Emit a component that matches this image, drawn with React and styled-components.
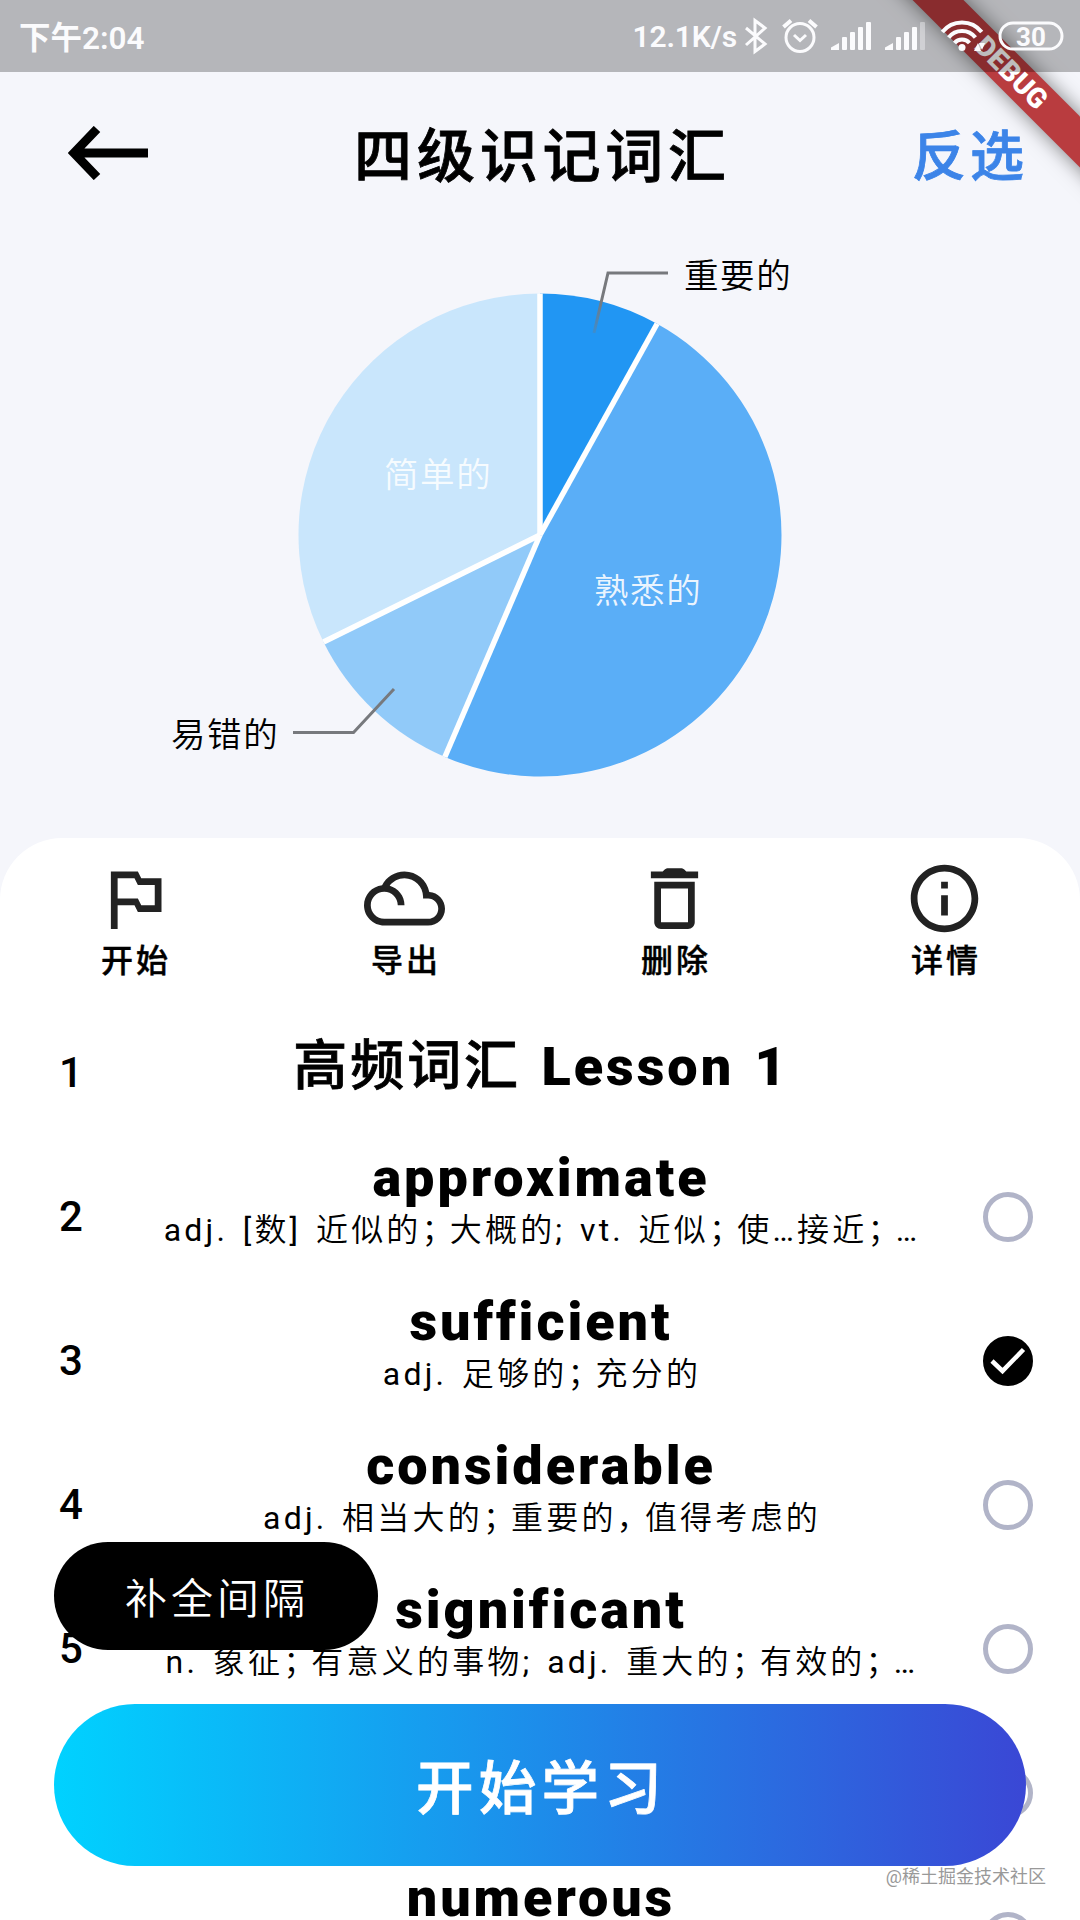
import React from "react";
import styled, { createGlobalStyle } from "styled-components";

const GlobalStyle = createGlobalStyle`
  * {
    box-sizing: border-box;
  }

  body {
    margin: 0;
    background: #f5f6fb;
    font-family: Roboto, "Noto Sans CJK SC", sans-serif;
  }
`;

const words = [
  { id: 1, hanzi: "高频词汇", title: " Lesson 1", heading: true },
  {
    id: 2,
    title: "approximate",
    meaning: "adj. [数] 近似的；大概的; vt. 近似；使…接近；…",
  },
  { id: 3, title: "sufficient", meaning: "adj. 足够的；充分的", checked: true },
  { id: 4, title: "considerable", meaning: "adj. 相当大的；重要的，值得考虑的" },
  {
    id: 5,
    title: "significant",
    meaning: "n. 象征；有意义的事物; adj. 重大的；有效的；…",
  },
  { id: 6 },
  { id: 7, title: "numerous" },
];

const actions = [
  {
    label: "开始",
    path: "M14 6l-1-2H5v17h2v-7h5l1 2h7V6h-6zm4 8h-4l-1-2H7V6h5l1 2h5v6z",
  },
  {
    label: "导出",
    path: "M19.35 10.04C18.67 6.59 15.64 4 12 4 9.11 4 6.61 5.64 5.36 8.04 2.35 8.36 0 10.9 0 14c0 3.31 2.69 6 6 6h13c2.76 0 5-2.24 5-5 0-2.64-2.05-4.78-4.65-4.96zM19 18H6c-2.21 0-4-1.79-4-4s1.79-4 4-4 4 1.79 4 4h2c0-2.76-1.86-5.08-4.4-5.78C8.61 6.88 10.2 6 12 6c3.03 0 5.5 2.47 5.5 5.5v.5H19c1.65 0 3 1.35 3 3s-1.35 3-3 3z",
  },
  {
    label: "删除",
    path: "M6 19c0 1.1.9 2 2 2h8c1.1 0 2-.9 2-2V7H6v12zM8 9h8v10H8V9zm7.5-5l-.6-.6c-.3-.3-.7-.4-1.1-.4h-3.6c-.4 0-.8.1-1.1.4L8.5 4H5v2h14V4h-3.5z",
  },
  {
    label: "详情",
    path: "M11 7h2v2h-2V7zm0 4h2v6h-2v-6zm1-9C6.48 2 2 6.48 2 12s4.48 10 10 10 10-4.48 10-10S17.52 2 12 2zm0 18c-4.41 0-8-3.59-8-8s3.59-8 8-8 8 3.59 8 8-3.59 8-8 8z",
  },
];

const Screen = styled.div`
  position: relative;
  width: 1080px;
  height: 1920px;
  overflow: hidden;
  display: flex;
  flex-direction: column;
  background: #f5f6fb;
  color: #000;
`;

const StatusBar = styled.div`
  position: relative;
  z-index: 3;
  flex: none;
  height: 72px;
  padding: 0 16px 0 19px;
  display: flex;
  align-items: center;
  justify-content: space-between;
  background: rgba(0, 0, 0, 0.26);
  color: #fbfbfd;
`;

const Clock = styled.span`
  padding-bottom: 3px;
  font-size: 31.5px;
  font-weight: 600;
`;

const StatusIcons = styled.div`
  display: flex;
  align-items: center;
  height: 72px;

  svg {
    display: block;
  }
`;

const Speed = styled.span`
  padding-right: 1px;
  font-size: 30px;
  font-weight: 600;
  letter-spacing: -0.2px;
`;

const Banner = styled.div`
  position: absolute;
  z-index: 2;
  top: 54px;
  left: 810px;
  width: 400px;
  height: 36px;
  padding-left: 3px;
  transform: rotate(45deg);
  background: #b93c3f;
  box-shadow: 0 0 20px rgba(0, 0, 0, 0.5);
  color: #fff;
  font-size: 28px;
  font-weight: 900;
  line-height: 36px;
  text-align: center;
`;

const Header = styled.header`
  flex: none;
  height: 168px;
  padding: 0 52px 6px 68px;
  display: grid;
  grid-template-columns: 189px 1fr 200px;
  align-items: center;

  svg {
    display: block;
  }
`;

const Title = styled.h1`
  margin: 0;
  padding-bottom: 2px;
  font-size: 58px;
  font-weight: 500;
  letter-spacing: 4.8px;
  text-align: center;
  -webkit-text-stroke: 0.8px currentColor;
`;

const Invert = styled.span`
  padding-bottom: 2px;
  color: #3c84e8;
  font-size: 54px;
  font-weight: 500;
  letter-spacing: 4px;
  text-align: right;
  -webkit-text-stroke: 0.8px currentColor;
`;

const Chart = styled.svg`
  flex: none;
  display: block;

  text {
    font-size: 34.5px;
    font-weight: 350;
    letter-spacing: 1.6px;
  }
`;

const Sheet = styled.main`
  flex: none;
  height: 1082px;
  overflow: hidden;
  border-radius: 62px 62px 0 0;
  background: #fff;
`;

const Actions = styled.div`
  height: 163px;
  padding-top: 20px;
  display: grid;
  grid-template-columns: repeat(4, 1fr);
`;

const Action = styled.div`
  display: flex;
  flex-direction: column;
  align-items: center;
  font-size: 32px;
  font-weight: 500;
  line-height: 44px;
  letter-spacing: 3px;
  text-indent: 2px;
  -webkit-text-stroke: 0.4px currentColor;

  svg {
    display: block;
    width: 81px;
    height: 81px;
    margin-left: -1px;
    fill: #222;
  }
`;

const Row = styled.div`
  height: 144px;
  padding: 0 47px 0 59px;
  display: grid;
  grid-template-columns: 95px 1fr 103px;
  align-items: center;
`;

const Index = styled.span`
  padding-bottom: 2px;
  font-size: 42px;
  font-weight: 500;
`;

const Entry = styled.div`
  padding-bottom: ${({ $heading }) => ($heading ? 12 : 34)}px;
  display: flex;
  flex-direction: column;
  align-items: center;
  white-space: nowrap;
`;

const Word = styled.div`
  padding-right: 2px;
  font-size: 54px;
  font-weight: 900;
  line-height: 60px;
  letter-spacing: 2.95px;
  white-space: pre;
  word-spacing: 4px;
`;

const Hanzi = styled.span`
  font-weight: 500;
  -webkit-text-stroke: 0.8px currentColor;
`;

const Meaning = styled.div`
  height: 44px;
  font-size: 32px;
  font-weight: 350;
  line-height: 44px;
  letter-spacing: 3.2px;
  word-spacing: 3.5px;
`;

const Latin = styled.span`
  font-weight: 400;
`;

// full-width marks sit a little tighter than the characters around them
const Mark = styled.span`
  margin-right: -7px;
`;

const Check = styled.span`
  justify-self: end;
  width: 50px;
  height: 50px;
  border: 5px solid ${({ $on }) => ($on ? "#000" : "#b1b4c8")};
  border-radius: 50%;
  background: ${({ $on }) => ($on ? "#000" : "#fff")};

  svg {
    display: block;
    margin: -5px;
  }
`;

const FillGap = styled.div`
  position: absolute;
  left: 54px;
  top: 1542px;
  width: 324px;
  height: 108px;
  padding: 0 0 2px 2px;
  border-radius: 54px;
  display: flex;
  align-items: center;
  justify-content: center;
  background: #000;
  color: #fff;
  font-size: 42px;
  font-weight: 350;
  letter-spacing: 4px;
`;

const StartButton = styled.div`
  position: absolute;
  left: 54px;
  top: 1704px;
  width: 972px;
  height: 162px;
  padding: 0 0 2px 3px;
  border-radius: 81px;
  display: flex;
  align-items: center;
  justify-content: center;
  background: linear-gradient(90deg, #00d2ff, #3a47d5);
  color: #fff;
  font-size: 57.5px;
  font-weight: 500;
  letter-spacing: 5.2px;
  -webkit-text-stroke: 0.8px currentColor;
`;

const Watermark = styled.div`
  position: absolute;
  right: 34px;
  top: 1863px;
  color: #999;
  font-size: 18px;
  line-height: 27px;
  text-shadow: 0 0 2px #fff;
`;

const CX = 540;
const CY = 295;
const R = 241.5;

const slices = [
  { from: 0, to: 29, color: "#2196f3" },
  { from: 29, to: 203.2, color: "#5aaef7" },
  { from: 203.2, to: 243.7, color: "#91caf9" },
  { from: 243.7, to: 360, color: "#c9e6fc" },
];

const pointAt = (deg) => {
  const a = (deg * Math.PI) / 180;
  return `${CX + R * Math.sin(a)} ${CY - R * Math.cos(a)}`;
};

const PieChart = () => (
  <Chart width="1080" height="598" viewBox="0 0 1080 598">
    <defs>
      <linearGradient
        id="leader"
        gradientUnits="userSpaceOnUse"
        x1="0"
        y1="93"
        x2="0"
        y2="60"
      >
        <stop offset="0" stopColor="#77797d" stopOpacity="0.3" />
        <stop offset="1" stopColor="#77797d" />
      </linearGradient>
    </defs>
    {slices.map(({ from, to, color }) => (
      <path
        key={from}
        fill={color}
        d={`M${CX} ${CY}L${pointAt(from)}A${R} ${R} 0 ${
          to - from > 180 ? 1 : 0
        } 1 ${pointAt(to)}Z`}
      />
    ))}
    {slices.map(({ from }) => (
      <path
        key={from}
        stroke="#fff"
        strokeWidth="5.5"
        d={`M${CX} ${CY}L${pointAt(from)}`}
      />
    ))}
    <g fill="none" strokeWidth="3">
      <path stroke="url(#leader)" d="M594 93L608 33H668" />
      <path stroke="#77797d" d="M394 449L353.5 492.5H293" />
    </g>
    <text x="684" y="48">重要的</text>
    <text x="171" y="507">易错的</text>
    <text x="384" y="247" fill="#fff" fillOpacity="0.85">简单的</text>
    <text x="594" y="363" fill="#fff" fillOpacity="0.9">熟悉的</text>
  </Chart>
);

const Signal = ({ x, faded }) => (
  <g transform={`translate(${x} 0)`}>
    <path d="M0 50V47.5L8 43V50Z" />
    <rect x="11" y="37" width="5" height="13" rx="1" />
    <rect x="19" y="32" width="5" height="18" rx="1" />
    <rect x="27" y="27" width="5" height="23" rx="1" />
    <rect x="35" y="22" width="5" height="28" rx="1" opacity={faded ? 0.4 : 1} />
  </g>
);

const StatusGlyphs = () => (
  <svg width="326" height="72" viewBox="738 0 326 72" fill="none">
    <g stroke="#fbfbfd" strokeWidth="3">
      <path d="M746 28L765 44L755 51.5V20.5L765 28L746 45" />
      <circle cx="800" cy="37.5" r="14" />
      <path d="M794 35L800 40.5L806 35" />
      <path d="M783.5 27L791 20.5M816.5 27L809 20.5" strokeWidth="4" />
      <rect x="1000" y="23" width="62" height="26" rx="13" />
    </g>
    <g fill="#fbfbfd">
      <Signal x={831} />
      <Signal x={885} faded />
      <circle cx="962" cy="47.5" r="3.5" />
      <path d="M974 51L978 43L981 51ZM979 43H985L982 50Z" />
    </g>
    <g stroke="#fbfbfd" strokeWidth="4">
      <path d="M942.3 32A25 25 0 0 1 981.7 32" />
      <path d="M948.6 37.5A17 17 0 0 1 975.4 37.5" />
      <path d="M954.5 43A9.8 9.8 0 0 1 969.5 43" />
    </g>
    <text
      x="1031"
      y="45.5"
      fill="#fbfbfd"
      fontSize="26"
      fontWeight="700"
      textAnchor="middle"
    >
      30
    </text>
  </svg>
);

const renderMeaning = (text) =>
  text.split(/([；，]|[\x20-\x7e…]+)/).map((part, i) => {
    if (/^[；，]$/.test(part)) return <Mark key={i}>{part}</Mark>;
    if (/^[\x20-\x7e…]/.test(part)) return <Latin key={i}>{part}</Latin>;
    return part;
  });

const App = () => (
  <Screen>
    <GlobalStyle />
    <StatusBar>
      <Clock>下午2:04</Clock>
      <StatusIcons>
        <Speed>12.1K/s</Speed>
        <StatusGlyphs />
      </StatusIcons>
    </StatusBar>
    <Banner>DEBUG</Banner>
    <Header>
      <svg width="81" height="54" viewBox="0 0 81 54">
        <path
          d="M80 27H6M29 3L6 27L29 51"
          fill="none"
          stroke="#000"
          strokeWidth="9"
        />
      </svg>
      <Title>四级识记词汇</Title>
      <Invert>反选</Invert>
    </Header>
    <PieChart />
    <Sheet>
      <Actions>
        {actions.map(({ label, path }) => (
          <Action key={label}>
            <svg viewBox="0 0 24 24">
              <path d={path} />
            </svg>
            {label}
          </Action>
        ))}
      </Actions>
      {words.map(({ id, hanzi, title, meaning, heading, checked }) => (
        <Row key={id}>
          <Index>{id}</Index>
          <Entry $heading={heading}>
            <Word>
              {hanzi && <Hanzi>{hanzi}</Hanzi>}
              {title}
            </Word>
            {!heading && <Meaning>{meaning && renderMeaning(meaning)}</Meaning>}
          </Entry>
          {!heading && (
            <Check $on={checked}>
              {checked && (
                <svg width="50" height="50" viewBox="0 0 50 50">
                  <path
                    d="M9 25L19.5 35L40.5 13.5"
                    fill="none"
                    stroke="#fff"
                    strokeWidth="4.5"
                  />
                </svg>
              )}
            </Check>
          )}
        </Row>
      ))}
    </Sheet>
    <FillGap>补全间隔</FillGap>
    <StartButton>开始学习</StartButton>
    <Watermark>@稀土掘金技术社区</Watermark>
  </Screen>
);

export default App;
